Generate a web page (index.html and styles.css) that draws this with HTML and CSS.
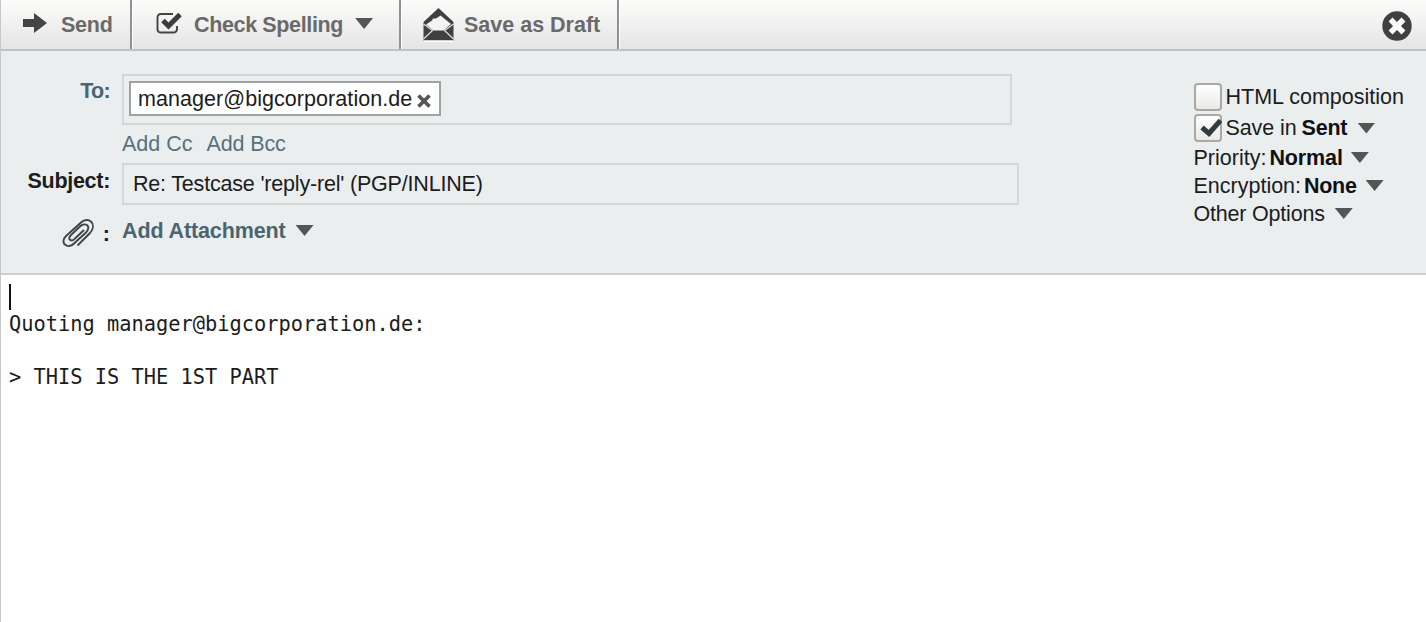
FILE: index.html
```html
<!DOCTYPE html>
<html lang="en">
<head>
<meta charset="utf-8">
<title>Compose message</title>
<link rel="stylesheet" href="styles.css">
</head>
<body>
<div class="window">
  <header class="toolbar">
    <div class="tool tool-send">
      <svg class="arrow-icon" width="26" height="22" viewBox="0 0 26 22"><path d="M1 7h11V1l13 10-13 10v-6H1z" fill="#444"/></svg>
      <span class="send">Send</span>
    </div>
    <div class="tool tool-spell">
      <svg class="spell-icon" width="27" height="24" viewBox="0 0 27 24"><path d="M17 2H5Q1.500 2 1.500 5.500V17Q1.500 20.500 5 20.500H17Q21 20.500 21 17V14" fill="none" stroke="#444" stroke-width="1.900"/><path d="M7 8.500 12.500 14 24 2.500" fill="none" stroke="#3d3d3d" stroke-width="5"/></svg>
      <span class="spell">Check Spelling</span>
      <i class="caret"></i>
    </div>
    <div class="tool tool-draft">
      <svg class="draft-icon" width="31" height="35" viewBox="0 0 31 35"><path d="M.500 15 15.500 1 30.500 15v18.500h-30z" fill="#404040"/><path d="M3 17.500 9 13.500 10 11.500 13 11.500 17.500 8.500 28 17 20.500 23.500H10.500z" fill="#f3f3f3"/><path d="M.500 17 9.500 23.500 .500 32M30.500 17 21.500 23.500l9 8.500" fill="none" stroke="#ddd" stroke-width="1.200"/><path d="M1 34.200h29" stroke="#fff" stroke-width="1.500"/></svg>
      <span class="draft">Save as Draft</span>
    </div>
    <svg class="close" width="30" height="30" viewBox="0 0 30 30"><circle cx="15" cy="15" r="14.700" fill="#404040"/><path d="m10.500 10.500 9 9m0-9-9 9" stroke="#fff" stroke-width="5.500" stroke-linecap="square"/></svg>
  </header>
  <main class="headers">
    <div class="fields">
      <div class="label label-to">To:</div>
      <div class="to-box">
        <div class="chip"><span class="address">manager@bigcorporation.de</span><svg class="remove" width="14" height="14" viewBox="0 0 14 14"><path d="m1.500 1.500 11 11m0-11-11 11" stroke="#555" stroke-width="3.700"/></svg></div>
      </div>
      <div class="add-links"><span class="cc">Add Cc</span><span class="bcc">Add Bcc</span></div>
      <div class="label label-subject"><span class="subject-label">Subject:</span></div>
      <div class="subject-box"><span class="subject">Re: Testcase 'reply-rel' (PGP/INLINE)</span></div>
      <div class="label label-clip">
        <svg width="34" height="30" viewBox="0 0 34 30"><path d="M16.500 27.500 29 15C37 5.500 27-2 20 4.500L5 18C-2 25 7 32 13 25.500L25 14.500C31 8 24 4 19.500 8L10.500 16.500C5 22 11 24 14 20.500L23 12" fill="none" stroke="#444" stroke-width="1.900"/></svg>
        <span>:</span>
      </div>
      <div class="attach"><span class="attachment">Add Attachment</span><i class="caret"></i></div>
    </div>
    <aside class="options">
      <div class="option check-row"><span class="checkbox"></span><span class="html">HTML composition</span></div>
      <div class="option check-row"><span class="checkbox"><svg width="27" height="27" viewBox="0 0 27 27"><path d="m7 12.500 7 6L25.500 5.500" fill="none" stroke="#333b3f" stroke-width="5"/></svg></span><span class="savein">Save in</span><b class="sent">Sent</b><i class="caret"></i></div>
      <div class="option"><span class="priority">Priority:</span><b class="normal">Normal</b><i class="caret"></i></div>
      <div class="option"><span class="encryption">Encryption:</span><b class="none">None</b><i class="caret"></i></div>
      <div class="option"><span class="other">Other Options</span><i class="caret"></i></div>
    </aside>
  </main>
  <section class="message"><div class="line"><span class="cursor"></span></div><div class="line">Quoting manager@bigcorporation.de:</div><div class="line"></div><div class="line">&gt; THIS IS THE 1ST PART</div></section>
</div>
</body>
</html>
```
FILE: styles.css
```css
* { box-sizing: border-box; }
body { margin: 0; }
svg { display: block; flex: none; }
.window { width: 1426px; height: 622px; overflow: hidden; display: flex; flex-direction: column; background: #fff; border-left: 1px solid #c6c8ca; font: 21.5px/28px "Liberation Sans", Arial, sans-serif; color: #1c1c1c; white-space: nowrap; }
.toolbar { height: 51px; display: flex; flex: none; background: linear-gradient(#fcfcfb, #e5e5e5); border-bottom: 2px solid #bac4c5; color: #6a6a6a; font-weight: bold; }
.tool { display: flex; align-items: flex-start; border-right: 2px solid #909095; box-shadow: 1px 0 #fff; }
.tool > span { margin-top: 11px; }
.tool-send { width: 131px; padding-left: 21px; }
.tool-spell { width: 269px; padding-left: 24px; }
.tool-draft { width: 218px; padding-left: 22px; }
.arrow-icon { margin: 12px 13px 0 0; }
.spell-icon { margin: 12px 11px 0 0; }
.draft-icon { margin: 7px 10px 0 0; }
.close { margin: 11px 14px 0 auto; }
.caret { display: block; flex: none; width: 18px; height: 11px; background: #555; clip-path: polygon(0 0, 100% 0, 50% 100%); margin-left: 10px; }
.tool .caret { margin: 18px 0 0 12px; }
.headers { height: 224px; flex: none; display: flex; background: #eaeeef; border-bottom: 2px solid #cdcfd0; }
.fields { width: 1192.5px; padding-top: 23px; display: grid; grid-template-columns: 109px 1fr; grid-template-rows: 51px 38px 42px 1fr; column-gap: 12px; }
.label { font-weight: bold; text-align: right; }
.label-to { color: #4b6570; padding-top: 3px; letter-spacing: -.7px; }
.to-box { width: 890px; border: 2px solid #d3d6d8; padding: 5px; }
.chip { width: 312px; height: 35px; display: flex; border: 2px solid #a0a2a3; background: #fff; padding: 2px 0 0 7px; }
.remove { margin: 9px 0 0 5px; }
.add-links { grid-column: 2; display: flex; gap: 14px; color: #58717b; padding-top: 5px; }
.label-subject { padding-top: 4px; }
.subject-box { width: 897px; border: 2px solid #d3d6d8; padding: 5px 0 0 9px; }
.label-clip { display: flex; justify-content: flex-end; gap: 7px; padding-top: 14px; }
.label-clip svg { margin: -1px 1px 0 0; }
.label-clip span { padding-top: 1px; }
.attach { color: #4b6570; font-weight: bold; display: flex; padding-top: 12px; }
.attach .caret { margin-top: 8px; }
.options { padding-top: 31px; }
.option { height: 28px; display: flex; align-items: center; }
.option:not(.check-row) > span, .option:not(.check-row) > b { position: relative; top: .5px; }
.check-row { height: 31px; }
.check-row:first-child { height: 30px; }
.option .caret { margin-top: 1px; }
.option b { margin-left: 5px; color: #111; }
.checkbox { flex: none; width: 28px; height: 28px; margin-right: 4px; border: 2px solid #aaa9a3; border-radius: 4px; background: linear-gradient(#fff, #e9e9e8); }
.checkbox svg { margin: -1px 0 0 -1px; }
.message { padding: 9px 0 0 8px; font: 20.35px/26.4px "DejaVu Sans Mono", monospace; }
.line { height: 26.4px; }
.line:first-child { height: 27.4px; }
.cursor { display: block; width: 2px; height: 26px; background: #111; }
.send { letter-spacing: -.25px; }
.spell { letter-spacing: -.36px; }
.subject-label { letter-spacing: -.3px; }
.address { letter-spacing: .06px; }
.subject { letter-spacing: -.19px; }
.bcc, .attachment { letter-spacing: -.12px; }
.savein { letter-spacing: -.1px; }
.sent { letter-spacing: -.2px; }
.option .normal { letter-spacing: -.1px; margin-left: 3px; }
.normal + .caret { margin-left: 8px; }
.option .none { letter-spacing: -.3px; margin-left: 3px; }
.none + .caret { margin-left: 9px; }
.other { letter-spacing: -.2px; }
.html { letter-spacing: 0; }
```
